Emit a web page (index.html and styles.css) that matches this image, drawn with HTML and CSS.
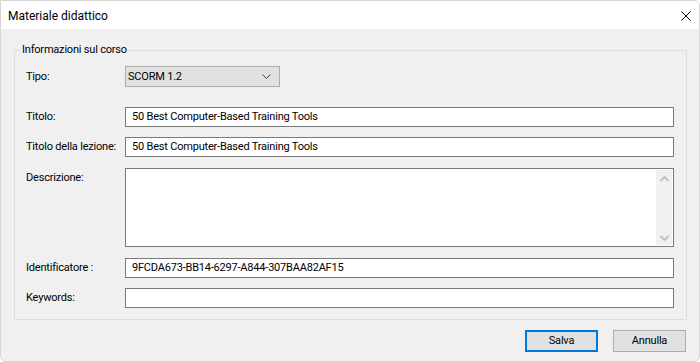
FILE: index.html
```html
<!DOCTYPE html>
<html lang="it">
  <head>
    <meta charset="UTF-8" />
    <meta name="viewport" content="width=device-width, initial-scale=1.0" />
    <title>Materiale didattico</title>
    <link rel="stylesheet" href="styles.css">
  </head>
  <body>
    <div class="window">
      <div class="titlebar">
        <span class="title">Materiale didattico</span>
        <span class="close">
          <svg width="10" height="10" viewBox="0 0 10 10">
            <path d="M0.5 0.5 L9.5 9.5 M9.5 0.5 L0.5 9.5" stroke="#000" stroke-width="1" fill="none" />
          </svg>
        </span>
      </div>

      <div class="content">
        <fieldset class="group">
          <legend>Informazioni sul corso</legend>
          <div class="form-grid">
            <label class="row-type">Tipo:</label>
            <div class="select row-type">
              <span>SCORM 1.2</span>
              <svg width="9" height="5" viewBox="0 0 9 5">
                <path d="M0.5 0.5 L4.5 4.5 L8.5 0.5" stroke="#444" stroke-width="1" fill="none" />
              </svg>
            </div>

            <label>Titolo:</label>
            <div class="field">50 Best Computer-Based Training Tools</div>

            <label>Titolo della lezione:</label>
            <div class="field">50 Best Computer-Based Training Tools</div>

            <label class="top">Descrizione:</label>
            <div class="memo">
              <div class="scrollbar">
                <svg width="9" height="6" viewBox="0 0 9 6">
                  <path d="M0.5 5 L4.5 1 L8.5 5" stroke="#c2c2c2" stroke-width="2" fill="none" />
                </svg>
                <svg width="9" height="6" viewBox="0 0 9 6">
                  <path d="M0.5 1 L4.5 5 L8.5 1" stroke="#c2c2c2" stroke-width="2" fill="none" />
                </svg>
              </div>
            </div>

            <label>Identificatore :</label>
            <div class="field">9FCDA673-BB14-6297-A844-307BAA82AF15</div>

            <label>Keywords:</label>
            <div class="field"></div>
          </div>
        </fieldset>

        <div class="actions">
          <button class="btn default">Salva</button>
          <button class="btn">Annulla</button>
        </div>
      </div>
    </div>
  </body>
</html>
```

FILE: styles.css
```css
body {
  margin: 0;
  font-family: Roboto, "Liberation Sans", Arial, sans-serif;
  font-size: 11px;
  letter-spacing: -0.2px;
  color: #000;
  background-color: #fff;
}
.window {
  width: 700px;
  height: 362px;
  box-sizing: border-box;
  border: 1px solid #d6d6d6;
  border-radius: 0 6px 6px 6px;
  background-color: #f0f0f0;
  display: flex;
  flex-direction: column;
  overflow: hidden;
}
.titlebar {
  height: 28px;
  flex: none;
  background-color: #fff;
  display: flex;
  align-items: center;
  justify-content: space-between;
  padding: 0 8px 0 7px;
}
.title {
  font-size: 12px;
  letter-spacing: 0;
  line-height: 16px;
  padding-top: 1px;
}
.close {
  display: flex;
  padding-top: 1px;
}
.content {
  padding: 14px 12px 0 13px;
}
.group {
  margin: 0;
  border: 1px solid #dcdcdc;
  padding: 9px 12px 11px 11px;
}
.group legend {
  margin-left: -6px;
  padding: 0 2px;
  line-height: 14px;
}
.form-grid {
  display: grid;
  grid-template-columns: 99px 1fr;
  row-gap: 10px;
  align-items: center;
}
.form-grid label {
  line-height: 14px;
  white-space: nowrap;
}
.form-grid label.top {
  align-self: start;
  padding-top: 4px;
}
.form-grid .row-type {
  margin-bottom: 10px;
}
.select {
  width: 155px;
  height: 21px;
  box-sizing: border-box;
  border: 1px solid #adadad;
  background-color: #e1e1e1;
  display: flex;
  align-items: center;
  justify-content: space-between;
  padding: 0 8px 0 2px;
}
.field {
  height: 20px;
  box-sizing: border-box;
  border: 1px solid #7a7a7a;
  background-color: #fff;
  padding: 0 6px;
  line-height: 18px;
  white-space: nowrap;
}
.memo {
  height: 79px;
  margin: 1px 0;
  box-sizing: border-box;
  border: 1px solid #7a7a7a;
  background-color: #fff;
  display: flex;
  justify-content: flex-end;
  padding: 1px;
}
.scrollbar {
  width: 16px;
  background-color: #f0f0f0;
  display: flex;
  flex-direction: column;
  justify-content: space-between;
  align-items: center;
  padding: 6px 0 4px;
}
.actions {
  display: flex;
  justify-content: flex-end;
  gap: 15px;
  margin-top: 10px;
  margin-right: 1px;
}
.btn {
  width: 73px;
  height: 22px;
  box-sizing: border-box;
  border: 1px solid #adadad;
  background-color: #e1e1e1;
  font-family: inherit;
  font-size: 11px;
  letter-spacing: inherit;
  line-height: 14px;
  color: #000;
  padding: 0;
}
.btn.default {
  border: 2px solid #0078d7;
}
```
